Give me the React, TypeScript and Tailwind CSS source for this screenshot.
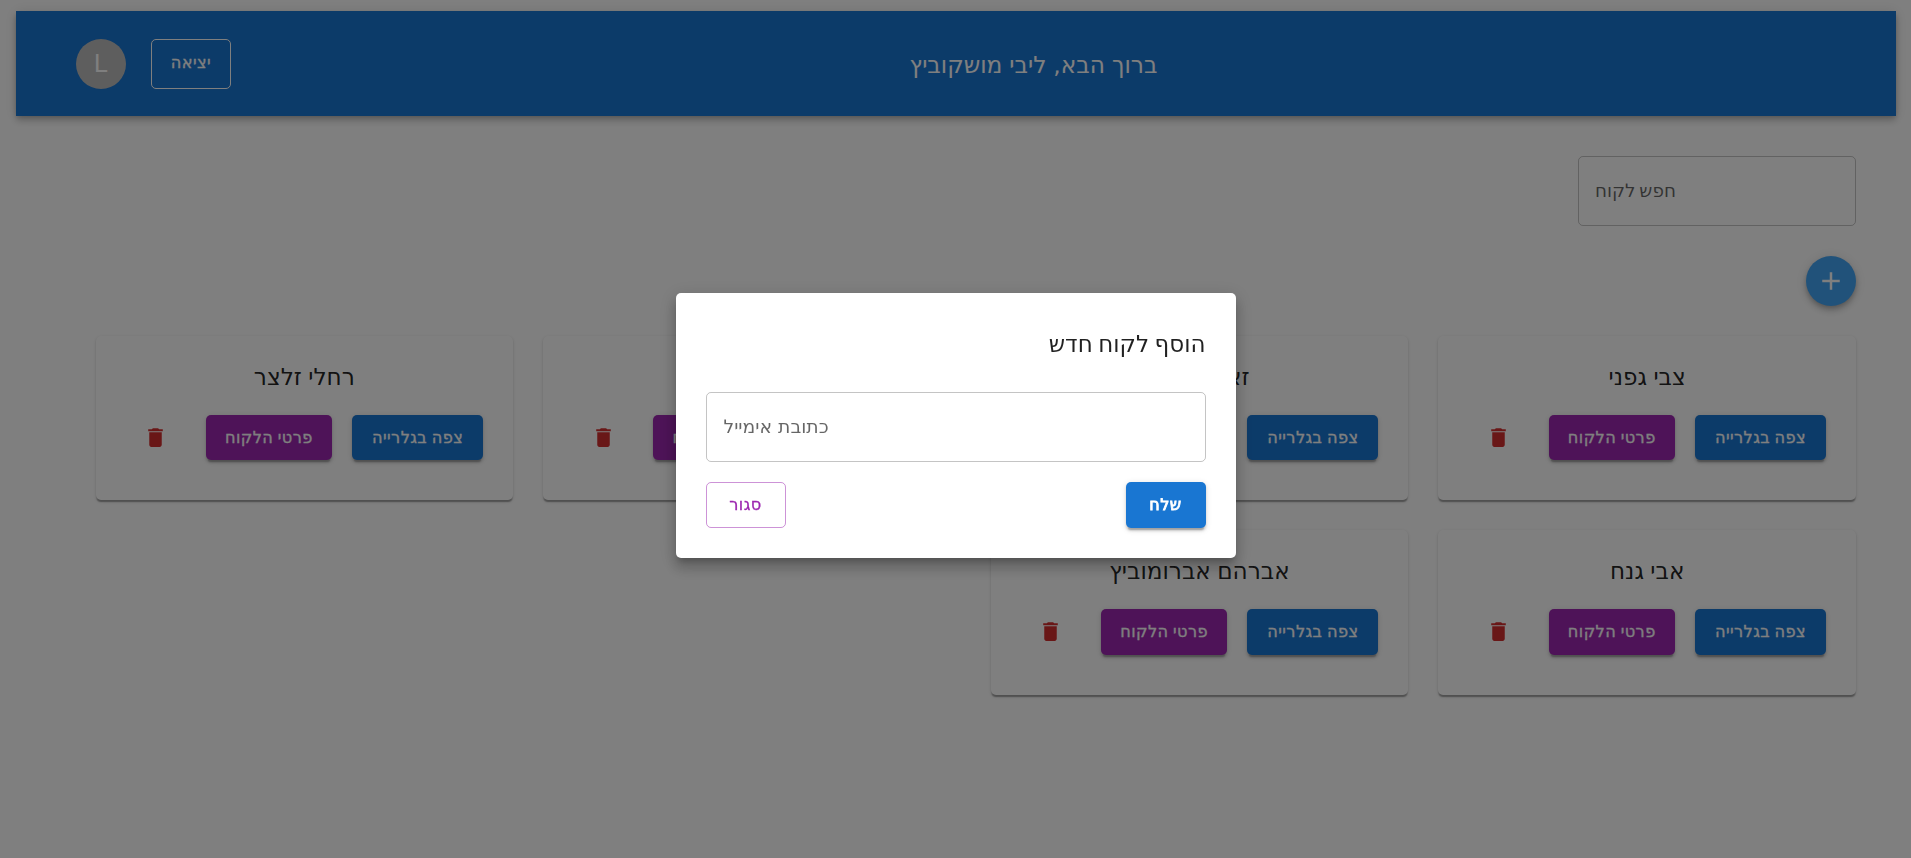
import React from "react";

const FONT = "font-['DejaVu_Sans',sans-serif]";

const raised =
  "shadow-[0px_3.75px_1.25px_-2.5px_rgba(0,0,0,0.2),0px_2.5px_2.5px_0px_rgba(0,0,0,0.14),0px_1.25px_6.25px_0px_rgba(0,0,0,0.12)]";

const label =
  "text-[16.2px] tracking-[0.025em] [word-spacing:-1px] [-webkit-text-stroke:0.3px_currentColor]";

const clients = [
  { first: "צבי", last: "גפני" },
  { first: "זאב", last: "לוינגר" },
  { first: "דוד", last: "כהן" },
  { first: "רחלי", last: "זלצר" },
  { first: "אבי", last: "גנח" },
  { first: "אברהם", last: "אברומוביץ" },
];

function TrashIcon() {
  return (
    <svg viewBox="0 0 24 24" className="size-[25px] fill-[#d32f2f]">
      <path d="M6 19c0 1.1.9 2 2 2h8c1.1 0 2-.9 2-2V7H6zM19 4h-3.5l-1-1h-5l-1 1H5v2h14z" />
    </svg>
  );
}

function Card({ name }: { name: string }) {
  return (
    <div className="h-[164.3px] rounded-[5px] bg-white px-[30px] pt-[21px] shadow-[0px_2.5px_1.25px_-1.25px_rgba(0,0,0,0.2),0px_1.25px_1.25px_0px_rgba(0,0,0,0.14),0px_1.25px_3.75px_0px_rgba(0,0,0,0.12)]">
      <h2 className="h-[58px] whitespace-nowrap text-center text-[23.2px] leading-10 text-black/87 [word-spacing:-1px]">
        {name}
      </h2>
      <div className="flex gap-5">
        <button className={`h-[45.4px] w-[131px] shrink-0 whitespace-nowrap rounded-[5px] bg-[#1976d2] text-white ${label} ${raised}`}>
          צפה בגלרייה
        </button>
        <button className={`h-[45.4px] w-[126.5px] shrink-0 whitespace-nowrap rounded-[5px] bg-[#9c27b0] text-white ${label} ${raised}`}>
          פרטי הלקוח
        </button>
        <button aria-label="מחק" className="flex flex-1 items-center justify-center">
          <TrashIcon />
        </button>
      </div>
    </div>
  );
}

export default function App() {
  return (
    <div dir="rtl" className={`h-[858px] overflow-hidden bg-white ${FONT}`}>
      <div className="pt-[11px] pr-[15px] pl-4">
        <header className="flex h-[105px] items-center bg-[#1976d2] px-[60px] text-white shadow-[0px_2.5px_5px_-1.25px_rgba(0,0,0,0.2),0px_5px_6.25px_0px_rgba(0,0,0,0.14),0px_1.25px_12.5px_0px_rgba(0,0,0,0.12)]">
          <h1 className="flex-1 pt-0.5 text-center text-[23.3px] leading-10 [word-spacing:-0.5px]">
            ברוך הבא, ליבי מושקוביץ
          </h1>
          <div className="flex gap-[25px]">
            <button className={`h-[50px] w-20 rounded-[5px] border border-white ${label}`}>
              יציאה
            </button>
            <div className="flex size-[50px] items-center justify-center rounded-full bg-[#bdbdbd] font-['Liberation_Sans',sans-serif] text-[25px] leading-none">
              L
            </div>
          </div>
        </header>
        <main className="pt-10 pr-10 pl-[79.5px]">
          <div className="flex h-[70px] w-[278px] items-center justify-end rounded-[5px] border border-black/23 px-4 text-[18.4px] text-black/60 [word-spacing:-2px]">
            חפש לקוח
          </div>
          <button
            aria-label="הוסף"
            className="mt-[30px] flex size-[50px] items-center justify-center rounded-full bg-[#42a5f5] shadow-[0px_2.5px_5px_-1.25px_rgba(0,0,0,0.2),0px_5px_6.25px_0px_rgba(0,0,0,0.14),0px_1.25px_12.5px_0px_rgba(0,0,0,0.12)]"
          >
            <svg viewBox="0 0 24 24" className="size-[30px] fill-white">
              <path d="M19 13h-6v6h-2v-6H5v-2h6V5h2v6h6z" />
            </svg>
          </button>
          <div className="mt-[30px] grid grid-cols-4 gap-[30px]">
            {clients.map((c) => (
              <Card key={c.first} name={`${c.first} ${c.last}`} />
            ))}
          </div>
        </main>
      </div>

      <div className="fixed inset-0 flex items-start justify-center bg-black/50 pt-[293px]">
        <div
          role="dialog"
          className="h-[265px] w-[560px] rounded-[5px] bg-white px-[30px] pt-[31px] shadow-[0px_6.25px_6.25px_-3.75px_rgba(0,0,0,0.2),0px_10px_12.5px_1.25px_rgba(0,0,0,0.14),0px_3.75px_17.5px_2.5px_rgba(0,0,0,0.12)]"
        >
          <h2 className="h-[68px] text-[23px] leading-10 text-black/87 [word-spacing:-1.7px]">
            הוסף לקוח חדש
          </h2>
          <div className="flex h-[70px] items-center justify-end rounded-[5px] border border-black/23 px-[17px] text-[18.8px] text-black/60">
            כתובת אימייל
          </div>
          <div className="mt-5 flex justify-between">
            <button className={`h-[46px] w-20 rounded-[5px] bg-[#1976d2] text-[16px] tracking-[0.02857em] text-white [-webkit-text-stroke:0.8px_currentColor] ${raised}`}>
              שלח
            </button>
            <button className={`h-[46px] w-20 rounded-[5px] border border-[#9c27b0]/50 text-[#9c27b0] ${label}`}>
              סגור
            </button>
          </div>
        </div>
      </div>
    </div>
  );
}
